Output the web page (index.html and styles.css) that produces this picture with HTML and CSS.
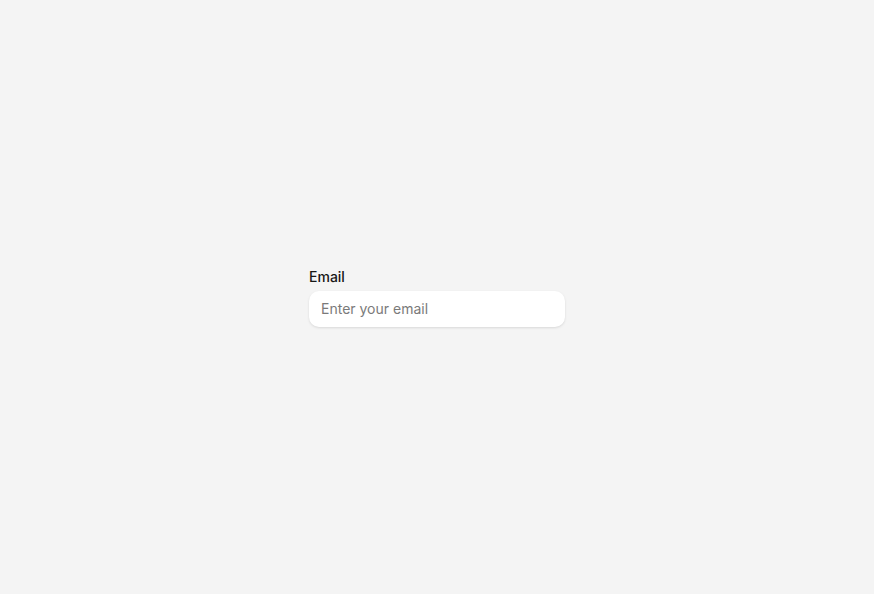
FILE: index.html
```html
<!DOCTYPE html>
<html lang="en">
<head>
<meta charset="utf-8">
<title>Email</title>
<link rel="stylesheet" href="styles.css">
</head>
<body>
<main class="page">
  <div class="field">
    <label class="field-label" for="email">Email</label>
    <input class="field-input" id="email" type="email" placeholder="Enter your email">
  </div>
</main>
</body>
</html>
```

FILE: styles.css
```css
html, body {
  margin: 0;
  padding: 0;
  height: 100%;
  background: #f4f4f4;
  font-family: Inter, "Noto Sans", sans-serif;
}
.page {
  min-height: 100%;
  display: flex;
  align-items: center;
  justify-content: center;
}
.field {
  width: 256px;
  display: flex;
  flex-direction: column;
  gap: 4px;
}
.field-label {
  font-size: 14px;
  line-height: 20px;
  font-weight: 500;
  color: #171717;
}
.field-input {
  box-sizing: border-box;
  width: 100%;
  height: 36px;
  padding: 0 12px 2px;
  border: none;
  border-radius: 10px;
  background: #ffffff;
  box-shadow: 0 1px 3px rgba(0,0,0,0.08), 0 1px 2px rgba(0,0,0,0.04);
  font-family: inherit;
  font-size: 14px;
  color: #171717;
  outline: none;
}
.field-input::placeholder {
  color: #7a7a7a;
}
```
